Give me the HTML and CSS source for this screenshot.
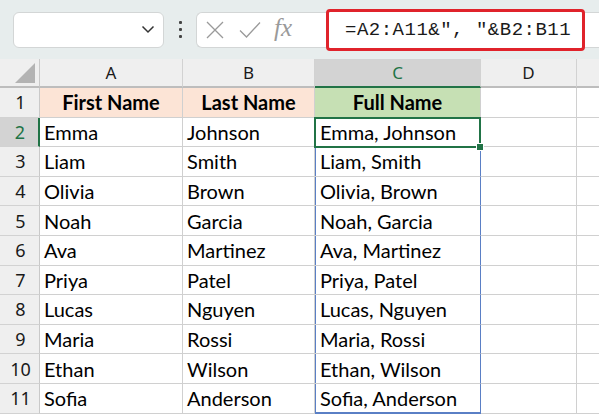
FILE: index.html
```html
<!DOCTYPE html>
<html>
<head>
<meta charset="utf-8">
<link rel="stylesheet" href="styles.css">
</head>
<body>
<div class="toolbar">
  <div class="namebox">
    <svg class="chev" width="14" height="9" viewBox="0 0 14 9"><path d="M1.5 1.5 L7 7 L12.5 1.5" fill="none" stroke="#333" stroke-width="1.5"/></svg>
  </div>
  <div class="dots"><span></span><span></span><span></span></div>
  <div class="fbar">
    <svg class="ico-x" width="18" height="18" viewBox="0 0 18 18"><path d="M1 1 L17 17 M17 1 L1 17" stroke="#9a9a9a" stroke-width="1.3" fill="none"/></svg>
    <svg class="ico-ok" width="22" height="18" viewBox="0 0 22 18"><path d="M1 9.5 L7.5 16 L21 1.5" stroke="#9a9a9a" stroke-width="1.3" fill="none"/></svg>
    <span class="fx">fx</span>
    <div class="formula">=A2:A11&amp;", "&amp;B2:B11</div>
  </div>
</div>
<div class="sheet">
  <div class="corner"><svg width="20" height="20" viewBox="0 0 20 20"><polygon points="20,0 20,20 0,20" fill="#b3b3b3"/></svg></div>
  <div class="ch">A</div><div class="ch">B</div><div class="ch sel">C</div><div class="ch">D</div><div class="ch last"></div>

  <div class="rh">1</div><div class="c hd">First Name</div><div class="c hd">Last Name</div><div class="c hd green">Full Name</div><div class="c"></div><div class="c last"></div>
  <div class="rh sel">2</div><div class="c">Emma</div><div class="c">Johnson</div><div class="c active">Emma, Johnson<span class="handle"></span></div><div class="c"></div><div class="c last"></div>
  <div class="rh">3</div><div class="c">Liam</div><div class="c">Smith</div><div class="c spill">Liam, Smith</div><div class="c"></div><div class="c last"></div>
  <div class="rh">4</div><div class="c">Olivia</div><div class="c">Brown</div><div class="c spill">Olivia, Brown</div><div class="c"></div><div class="c last"></div>
  <div class="rh">5</div><div class="c">Noah</div><div class="c">Garcia</div><div class="c spill">Noah, Garcia</div><div class="c"></div><div class="c last"></div>
  <div class="rh">6</div><div class="c">Ava</div><div class="c">Martinez</div><div class="c spill">Ava, Martinez</div><div class="c"></div><div class="c last"></div>
  <div class="rh">7</div><div class="c">Priya</div><div class="c">Patel</div><div class="c spill">Priya, Patel</div><div class="c"></div><div class="c last"></div>
  <div class="rh">8</div><div class="c">Lucas</div><div class="c">Nguyen</div><div class="c spill">Lucas, Nguyen</div><div class="c"></div><div class="c last"></div>
  <div class="rh">9</div><div class="c">Maria</div><div class="c">Rossi</div><div class="c spill">Maria, Rossi</div><div class="c"></div><div class="c last"></div>
  <div class="rh">10</div><div class="c">Ethan</div><div class="c">Wilson</div><div class="c spill">Ethan, Wilson</div><div class="c"></div><div class="c last"></div>
  <div class="rh">11</div><div class="c">Sofia</div><div class="c">Anderson</div><div class="c spill end">Sofia, Anderson</div><div class="c"></div><div class="c last"></div>
</div>
</body>
</html>
```

FILE: styles.css
```css
* { box-sizing: border-box; }
html, body { margin: 0; padding: 0; background: #ffffff; overflow: hidden; }
body { width: 599px; height: 414px; font-family: Lato, "Noto Sans", sans-serif; }

.toolbar {
  height: 59px;
  background: #e7eded;
  display: flex;
  align-items: center;
  padding-left: 13px;
}
.namebox {
  width: 151px;
  height: 36px;
  background: #fff;
  border: 1px solid #d3d6d6;
  border-radius: 6px;
  display: flex;
  align-items: center;
  justify-content: flex-end;
  padding-right: 8px;
}
.dots {
  width: 32px;
  display: flex;
  flex-direction: column;
  align-items: center;
  gap: 4px;
}
.dots span { width: 3px; height: 3px; background: #444; border-radius: 1px; display: block; }
.fbar {
  flex: 1;
  height: 36px;
  background: #fff;
  border: 1px solid #d3d6d6;
  border-right: none;
  border-radius: 6px 0 0 6px;
  display: flex;
  align-items: center;
  padding-left: 9px;
}
.ico-x { margin-right: 15px; }
.ico-ok { margin-right: 13px; }
.fx {
  font-family: "Liberation Serif", serif;
  font-style: italic;
  font-size: 25px;
  color: #9a9a9a;
  margin-top: -4px;
  width: 24px;
}
.formula {
  margin-left: 28px;
  width: 259px;
  height: 42px;
  border: 3px solid #e0232b;
  border-radius: 4px;
  background: #fff;
  display: flex;
  align-items: center;
  padding-left: 16px;
  font-family: "Liberation Mono", monospace;
  font-size: 19px;
  letter-spacing: 0.5px;
  color: #1a1a1a;
  white-space: pre;
}

.sheet {
  display: grid;
  grid-template-columns: 40px 143px 132px 166px 96px 1fr;
  grid-template-rows: 29px repeat(11, 29.6px);
  font-size: 20px;
  color: #000;
}
.corner {
  background: #efefef;
  border-right: 1px solid #c9c9c9;
  border-bottom: 2px solid #bdbdbd;
  display: flex;
  align-items: flex-end;
  justify-content: flex-end;
  padding: 0 4px 3px 0;
}
.ch {
  background: #efefef;
  border-right: 1px solid #d2d2d2;
  border-bottom: 2px solid #bdbdbd;
  display: flex;
  align-items: center;
  justify-content: center;
  font-family: "Noto Sans", sans-serif;
  font-size: 17px;
  color: #1a1a1a;
}
.ch.sel {
  background: #d3d3d3;
  color: #217346;
  border-bottom: 2px solid #217346;
}
.ch.last { border-right: none; }
.rh {
  background: #efefef;
  border-right: 1px solid #c9c9c9;
  border-bottom: 1px solid #d2d2d2;
  display: flex;
  align-items: center;
  justify-content: center;
  font-family: "Noto Sans", sans-serif;
  font-size: 18px;
  color: #1a1a1a;
  padding-left: 2px;
}
.rh.sel {
  background: #d3d3d3;
  color: #217346;
  border-right: 2px solid #217346;
}
.c {
  border-right: 1px solid #d0d0d0;
  border-bottom: 1px solid #d0d0d0;
  display: flex;
  align-items: center;
  padding-left: 4px;
  white-space: nowrap;
  position: relative;
}
.c.last { border-right: none; }
.c.hd {
  background: #fce4d6;
  font-weight: bold;
  justify-content: center;
  padding-left: 0;
}
.c.hd.green { background: #c6e0b4; }
.c.active {
  border: 2px solid #217346;
  margin: -1px 0 -1px -1px;
  padding-left: 4px;
  z-index: 2;
}
.handle {
  position: absolute;
  right: -5px;
  bottom: -5px;
  width: 8px;
  height: 8px;
  background: #217346;
  border: 1px solid #fff;
}
.c.spill {
  border-right: 1px solid #5a7fc5;
  box-shadow: inset 1px 0 0 #5a7fc5;
  padding-left: 5px;
}
.c.spill.end { border-bottom: 2px solid #5a7fc5; }
```
